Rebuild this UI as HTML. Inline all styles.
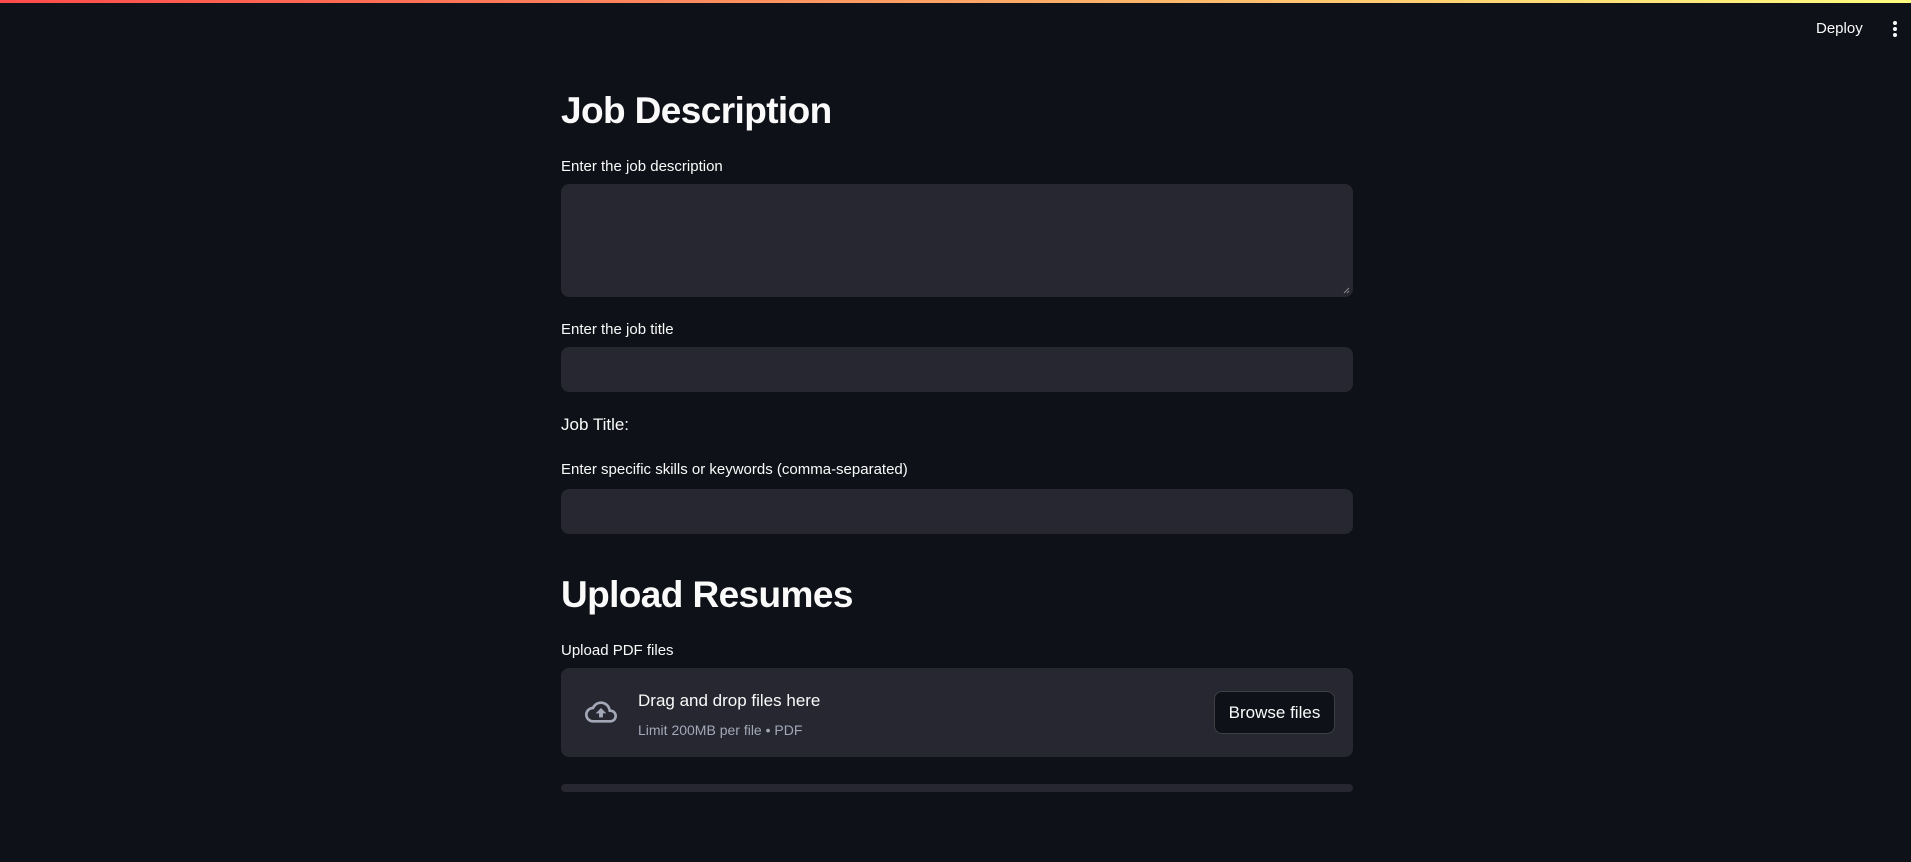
<!DOCTYPE html>
<html><head><meta charset="utf-8"><style>
*{box-sizing:border-box;margin:0;padding:0}
body{width:1911px;height:862px;background:#0e1117;font-family:"Liberation Sans",sans-serif;color:#fafafa;position:relative;overflow:hidden}
.bar{position:absolute;top:0;left:0;width:1911px;height:3px;background:linear-gradient(90deg,#ff4b4b,#fffd80)}
.abs{position:absolute}
h1{position:absolute;left:561px;font-size:37px;font-weight:700;letter-spacing:-0.6px;line-height:1}
.lbl{position:absolute;left:561px;font-size:15px;letter-spacing:0;line-height:1}
.box{position:absolute;left:561px;width:792px;background:#262730;border-radius:8px}
</style></head><body>
<div class="bar"></div>
<div class="abs" style="left:1816px;top:20px;font-size:15px">Deploy</div>
<div class="abs" style="left:1893px;top:21px;width:4px">
<div style="width:4px;height:4px;border-radius:2px;background:#fafafa;margin-bottom:2px"></div>
<div style="width:4px;height:4px;border-radius:2px;background:#fafafa;margin-bottom:2px"></div>
<div style="width:4px;height:4px;border-radius:2px;background:#fafafa"></div></div>

<h1 style="top:92px">Job Description</h1>
<div class="lbl" style="top:159px">Enter the job description</div>
<div class="box" style="top:184px;height:113px">
<svg style="position:absolute;right:3px;bottom:3px" width="7" height="7"><path d="M6 1L1 6M6 4L4 6" stroke="#888" stroke-width="1"/></svg></div>
<div class="lbl" style="top:322px">Enter the job title</div>
<div class="box" style="top:347px;height:45px"></div>
<div class="abs" style="left:561px;top:415px;font-size:17px">Job Title:</div>
<div class="lbl" style="top:462px">Enter specific skills or keywords (comma-separated)</div>
<div class="box" style="top:489px;height:45px"></div>

<h1 style="top:576px">Upload Resumes</h1>
<div class="lbl" style="top:643px">Upload PDF files</div>
<div class="box" style="top:668px;height:89px">
<svg class="abs" style="left:18px;top:28px" width="44" height="32" viewBox="0 0 24 24"><path d="M19.35 10.04A7.490 7.490 0 0 0 12 4C9.11 4 6.6 5.64 5.35 8.04A5.994 5.994 0 0 0 0 14c0 3.31 2.690 6 6 6h13c2.760 0 5-2.240 5-5 0-2.640-2.050-4.780-4.650-4.960zM19 18H6c-2.210 0-4-1.790-4-4 0-2.050 1.530-3.760 3.560-3.970l1.070-.110.5-.950A5.470 5.470 0 0 1 12 6c2.620 0 4.880 1.860 5.390 4.430l.3 1.500 1.530.110A2.980 2.980 0 0 1 22 15c0 1.650-1.350 3-3 3zM8 13h2.550v3h2.900v-3H16l-4-4z" fill="#a3a8b8"/></svg>
<div class="abs" style="left:77px;top:23px;font-size:17px">Drag and drop files here</div>
<div class="abs" style="left:77px;top:54px;font-size:14px;color:#a3a8b8">Limit 200MB per file • PDF</div>
<div class="abs" style="left:653px;top:23px;width:121px;height:43px;background:#0e1117;border:1px solid rgba(250,250,250,.2);border-radius:8px;font-size:17px;text-align:center;line-height:41px">Browse files</div>
</div>
<div class="box" style="top:784px;height:8px;border-radius:4px"></div>
</body></html>
